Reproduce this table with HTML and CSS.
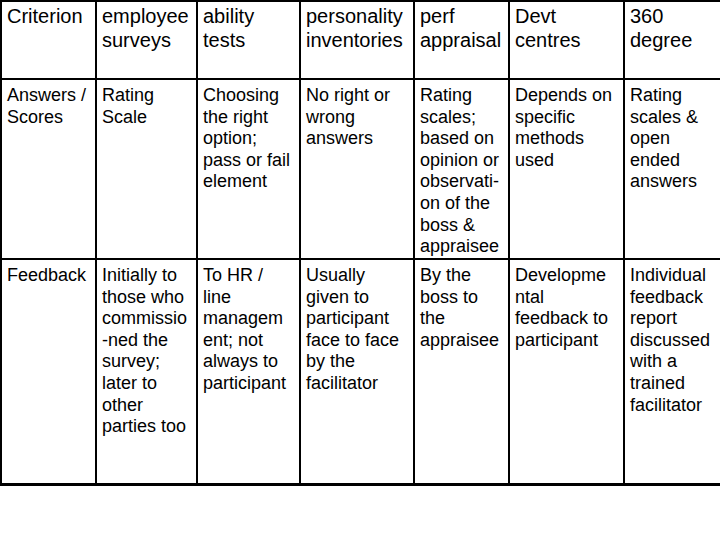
FILE: index.html
```html
<!DOCTYPE html>
<html>
<head>
<meta charset="utf-8">
<link rel="stylesheet" href="styles.css">
</head>
<body>
<table class="grid">
  <tr class="head">
    <td class="c1">Criterion</td>
    <td class="c2">employee<br>surveys</td>
    <td class="c3">ability<br>tests</td>
    <td class="c4">personality<br>inventories</td>
    <td class="c5">perf<br>appraisal</td>
    <td class="c6">Devt<br>centres</td>
    <td class="c7">360<br>degree</td>
  </tr>
  <tr class="answers">
    <td>Answers /<br>Scores</td>
    <td>Rating<br>Scale</td>
    <td>Choosing<br>the right<br>option;<br>pass or fail<br>element</td>
    <td>No right or<br>wrong<br>answers</td>
    <td>Rating<br>scales;<br>based on<br>opinion or<br>observati-<br>on of the<br>boss &amp;<br>appraisee</td>
    <td>Depends on<br>specific<br>methods<br>used</td>
    <td>Rating<br>scales &amp;<br>open<br>ended<br>answers</td>
  </tr>
  <tr class="feedback">
    <td>Feedback</td>
    <td>Initially to<br>those who<br>commissio<br>-ned the<br>survey;<br>later to<br>other<br>parties too</td>
    <td>To HR /<br>line<br>managem<br>ent; not<br>always to<br>participant</td>
    <td>Usually<br>given to<br>participant<br>face to face<br>by the<br>facilitator</td>
    <td>By the<br>boss to<br>the<br>appraisee</td>
    <td>Developme<br>ntal<br>feedback to<br>participant</td>
    <td>Individual<br>feedback<br>report<br>discussed<br>with a<br>trained<br>facilitator</td>
  </tr>
</table>
</body>
</html>
```
FILE: styles.css
```css
html {
  overflow: hidden;
  background: #ffffff;
}
body {
  margin: 0;
  background: #ffffff;
  font-family: "Liberation Sans", Arial, sans-serif;
  color: #000000;
}
.grid {
  border-collapse: separate;
  border-spacing: 0;
  table-layout: fixed;
  width: 724px;
  border-top: 2px solid #000;
  border-left: 2px solid #000;
}
.grid td {
  box-sizing: border-box;
  border-right: 2px solid #000;
  border-bottom: 2px solid #000;
  vertical-align: top;
  white-space: nowrap;
  overflow: hidden;
  padding: 5px 0 0 5px;
  font-size: 18px;
  line-height: 21.6px;
}
.c1 { width: 95px; }
.c2 { width: 101px; }
.c3 { width: 103px; }
.c4 { width: 114px; }
.c5 { width: 95px; }
.c6 { width: 115px; }
.c7 { width: 99px; }
.head td {
  height: 78px;
  padding-top: 2px;
  font-size: 20px;
  line-height: 24px;
}
.answers td {
  height: 180px;
}
.feedback td {
  height: 226px;
  border-bottom-width: 3px;
}
```
